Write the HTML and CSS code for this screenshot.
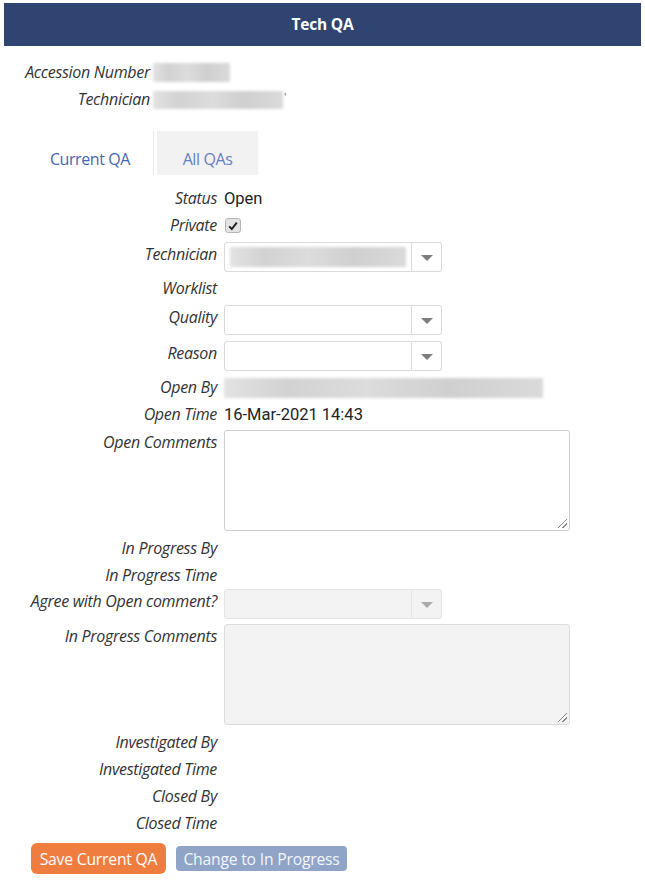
FILE: index.html
```html
<!DOCTYPE html>
<html>
<head>
<meta charset="utf-8">
<link rel="stylesheet" href="styles.css">
</head>
<body>
<div class="header">Tech QA</div>

<div class="info">
  <div class="info-label">Accession Number</div>
  <div class="info-val"><span class="blur blur-acc"></span></div>
  <div class="info-label">Technician</div>
  <div class="info-val"><span class="blur blur-tech"></span><span class="tick">'</span></div>
</div>

<div class="tabs">
  <div class="tab tab-active">Current QA</div>
  <div class="tab-sep"></div>
  <div class="tab tab-other">All QAs</div>
</div>

<div class="form">
  <div class="row text-row"><div class="lbl">Status</div><div class="val">Open</div></div>
  <div class="row text-row"><div class="lbl">Private</div><div class="val"><span class="check"><svg width="10" height="10" viewBox="0 0 10 10"><path d="M1.2 5.4 L3.8 8 L8.8 1.6" fill="none" stroke="#222" stroke-width="2"/></svg></span></div></div>
  <div class="row sel-row"><div class="lbl">Technician</div><div class="val"><div class="select"><div class="sel-box"><span class="blur blur-sel"></span></div><div class="sel-btn"><span class="caret"></span></div></div></div></div>
  <div class="row text-row"><div class="lbl">Worklist</div><div class="val"></div></div>
  <div class="row sel-row"><div class="lbl">Quality</div><div class="val"><div class="select"><div class="sel-box"></div><div class="sel-btn"><span class="caret"></span></div></div></div></div>
  <div class="row sel-row"><div class="lbl">Reason</div><div class="val"><div class="select"><div class="sel-box"></div><div class="sel-btn"><span class="caret"></span></div></div></div></div>
  <div class="row text-row"><div class="lbl">Open By</div><div class="val"><span class="blur blur-open"></span></div></div>
  <div class="row text-row"><div class="lbl">Open Time</div><div class="val">16-Mar-2021 14:43</div></div>
  <div class="row ta-row"><div class="lbl">Open Comments</div><div class="val"><div class="textarea"><span class="grip"></span></div></div></div>
  <div class="row text-row"><div class="lbl">In Progress By</div><div class="val"></div></div>
  <div class="row text-row"><div class="lbl">In Progress Time</div><div class="val"></div></div>
  <div class="row sel-row sel-agree"><div class="lbl">Agree with Open comment?</div><div class="val"><div class="select disabled"><div class="sel-box"></div><div class="sel-btn"><span class="caret"></span></div></div></div></div>
  <div class="row ta-row ta-progress"><div class="lbl">In Progress Comments</div><div class="val"><div class="textarea disabled"><span class="grip"></span></div></div></div>
  <div class="row text-row"><div class="lbl">Investigated By</div><div class="val"></div></div>
  <div class="row text-row"><div class="lbl">Investigated Time</div><div class="val"></div></div>
  <div class="row text-row"><div class="lbl">Closed By</div><div class="val"></div></div>
  <div class="row text-row"><div class="lbl">Closed Time</div><div class="val"></div></div>
</div>

<div class="buttons">
  <button class="btn btn-save">Save Current QA</button>
  <button class="btn btn-change">Change to In Progress</button>
</div>
</body>
</html>
```

FILE: styles.css
```css
html, body {
  margin: 0;
  padding: 0;
  background: #fff;
}
body {
  font-family: "Open Sans", "DejaVu Sans", sans-serif;
  color: #333;
}
.header {
  margin: 3px 4px 0 4px;
  height: 43px;
  background: #2f4470;
  color: #fff;
  font-weight: 700;
  font-size: 15.5px;
  line-height: 43px;
  text-align: center;
  letter-spacing: -0.2px;
}
.info {
  display: grid;
  grid-template-columns: 150px auto;
  column-gap: 3px;
  padding-top: 13px;
}
.info-label {
  text-align: right;
  font-style: italic;
  font-size: 16px;
  line-height: 27px;
  height: 27px;
  color: #333;
  letter-spacing: -0.3px;
}
.info-val {
  display: flex;
  align-items: center;
  height: 27px;
}
.blur {
  display: inline-block;
  background: linear-gradient(90deg, #e2e2e2, #d2d2d2 20%, #dcdcdc 45%, #cfcfcf 70%, #dadada);
  filter: blur(1.5px);
}
.blur-acc { width: 77px; height: 19px; }
.blur-tech { width: 130px; height: 18px; }
.tick { font-size: 11px; color: #555; margin-left: 1px; margin-top: -6px; }
.tabs {
  display: flex;
  margin-top: 18px;
  margin-left: 27px;
  height: 44px;
}
.tab {
  box-sizing: border-box;
  height: 44px;
  padding-top: 17px;
  line-height: 22px;
  text-align: center;
}
.tab-active {
  width: 126px;
  color: #4766b0;
  font-size: 16px;
  letter-spacing: -0.4px;
}
.tab-sep {
  width: 1px;
  background: #ececec;
  height: 44px;
  margin-right: 3px;
}
.tab-other {
  width: 101px;
  background: #f2f2f2;
  color: #6780c4;
  font-size: 16px;
  letter-spacing: -0.4px;
}
.form {
  margin-top: 10px;
  display: flex;
  flex-direction: column;
}
.row {
  display: grid;
  grid-template-columns: 217px auto;
  column-gap: 7px;
}
.lbl {
  text-align: right;
  font-style: italic;
  font-size: 16px;
  color: #333;
  letter-spacing: -0.3px;
  white-space: nowrap;
}
.text-row { height: 27px; }
.text-row .lbl { line-height: 27px; }
.val {
  font-family: Roboto, "Open Sans", sans-serif;
  font-size: 16.5px;
  color: #222;
  line-height: 27px;
}
.text-row .val { display: flex; align-items: center; }
.sel-row { margin: 3px 0; height: 30px; }
.sel-row .lbl { line-height: 22px; padding-top: 1px; }
.sel-agree { margin: 0 0 5px 0; }
.ta-row { margin: 2px 0 4px 0; height: 101px; }
.ta-progress { margin-top: 0; }
.ta-row .lbl { line-height: 22px; padding-top: 1px; }
.check {
  box-sizing: border-box;
  width: 16px;
  height: 15px;
  margin-left: 1px;
  border: 1px solid #b5b5b5;
  border-radius: 3px;
  background: #e4e4e4;
  display: flex;
  align-items: center;
  justify-content: center;
}
.select {
  display: flex;
  height: 30px;
}
.sel-box {
  box-sizing: border-box;
  width: 188px;
  height: 30px;
  border: 1px solid #dadada;
  border-radius: 3px 0 0 3px;
  background: #fff;
  display: flex;
  align-items: center;
  padding-left: 5px;
}
.sel-btn {
  box-sizing: border-box;
  width: 30px;
  height: 30px;
  border: 1px solid #dadada;
  border-left: none;
  border-radius: 0 3px 3px 0;
  background: #fff;
  display: flex;
  align-items: center;
  justify-content: center;
}
.caret {
  width: 0;
  height: 0;
  border-left: 6px solid transparent;
  border-right: 6px solid transparent;
  border-top: 6px solid #7d7d7d;
  margin-top: 2px;
}
.blur-sel { width: 176px; height: 20px; }
.blur-open { width: 319px; height: 20px; }
.select.disabled .sel-box,
.select.disabled .sel-btn {
  background: #f3f3f3;
  border-color: #e4e4e4;
}
.select.disabled .caret { border-top-color: #aaa; }
.textarea {
  box-sizing: border-box;
  width: 346px;
  height: 101px;
  border: 1px solid #cfcfcf;
  border-radius: 3px;
  background: #fff;
  position: relative;
}
.textarea.disabled {
  background: #f3f3f3;
  border-color: #dcdcdc;
}
.grip {
  position: absolute;
  right: 2px;
  bottom: 2px;
  width: 9px;
  height: 9px;
  background: linear-gradient(135deg, transparent 45%, #888 45%, #888 53%, transparent 53%, transparent 70%, #888 70%, #888 78%, transparent 78%);
}
.buttons {
  display: flex;
  align-items: center;
  margin-top: 6px;
  margin-left: 31px;
  gap: 10px;
}
.btn {
  font-family: "Open Sans", sans-serif;
  font-size: 15.7px;
  border: none;
  color: #fff;
  padding: 0;
  cursor: pointer;
  letter-spacing: -0.2px;
}
.btn-save {
  width: 135px;
  height: 31px;
  background: #ee7d3f;
  border-radius: 6px;
}
.btn-change {
  width: 171px;
  height: 25px;
  background: #8fa4c6;
  border-radius: 4px;
  color: #f4f6fb;
}
```
